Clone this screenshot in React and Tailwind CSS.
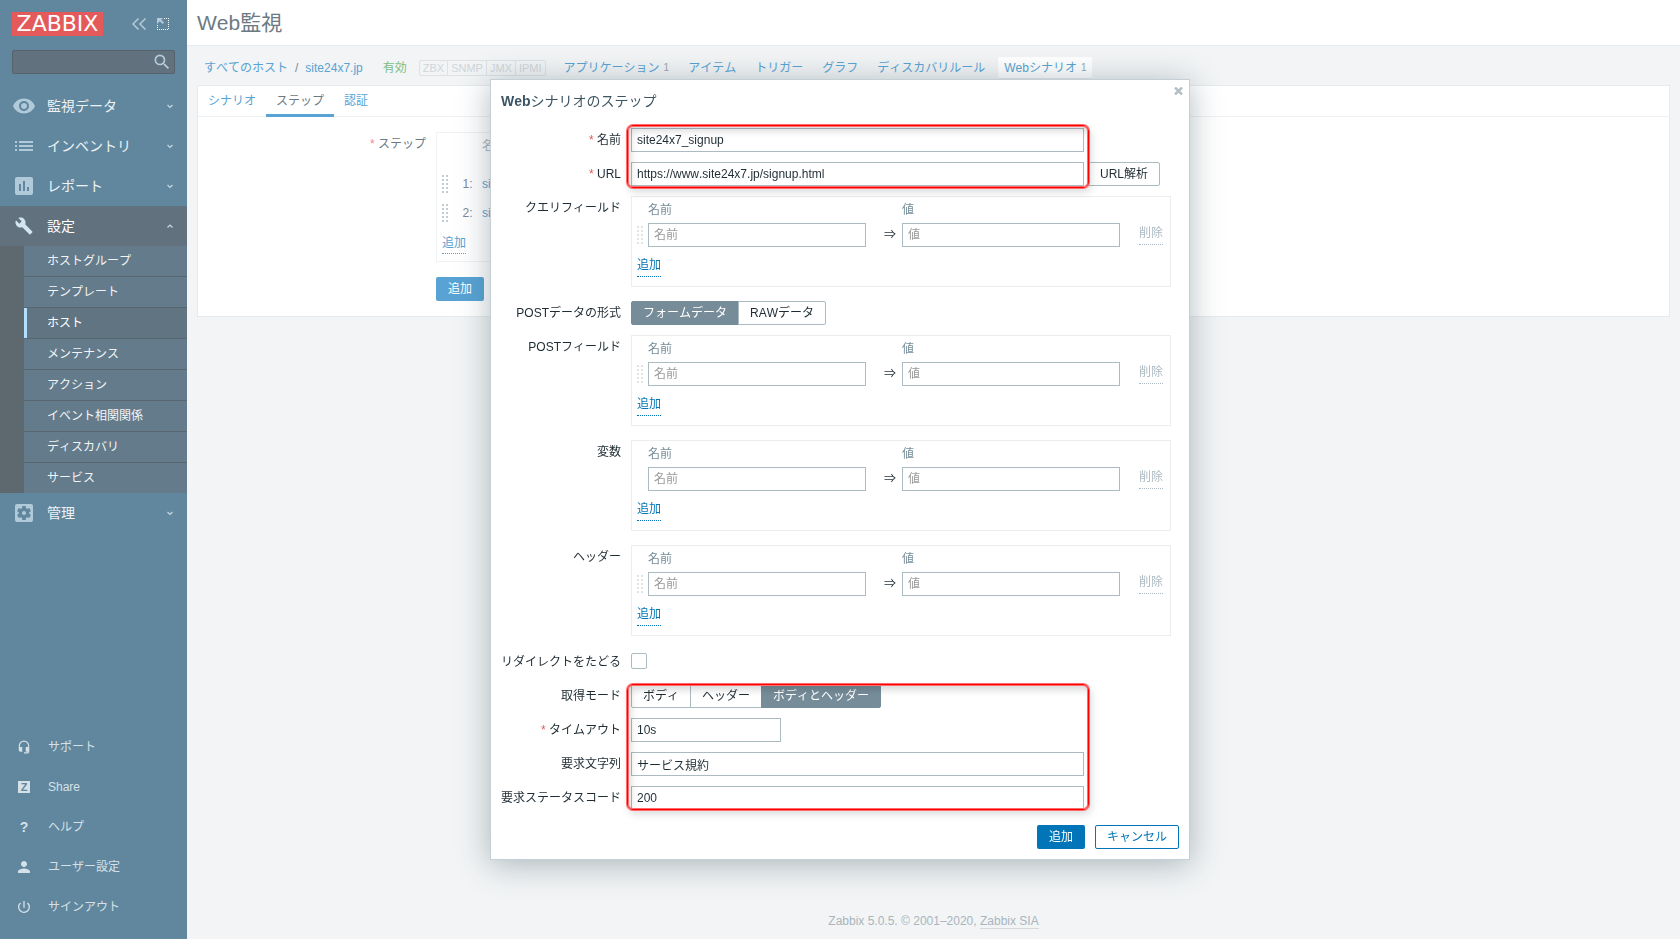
import React, { useState } from 'react';
import {
  MdVisibility,
  MdList,
  MdAssessment,
  MdSettingsApplications,
  MdSearch,
  MdHeadsetMic,
  MdPerson,
  MdPowerSettingsNew,
} from 'react-icons/md';

const mainMenu = [
  { label: '監視データ', icon: MdVisibility },
  { label: 'インベントリ', icon: MdList },
  { label: 'レポート', icon: MdAssessment },
  {
    label: '設定',
    icon: Wrench,
    open: true,
    items: [
      'ホストグループ',
      'テンプレート',
      'ホスト',
      'メンテナンス',
      'アクション',
      'イベント相関関係',
      'ディスカバリ',
      'サービス',
    ],
  },
  { label: '管理', icon: MdSettingsApplications },
];

const hostLinks = [
  { label: 'アプリケーション', count: 1 },
  { label: 'アイテム' },
  { label: 'トリガー' },
  { label: 'グラフ' },
  { label: 'ディスカバリルール' },
  { label: 'Webシナリオ', count: 1, selected: true },
];

function Wrench({ size, className }) {
  return (
    <svg width={size} height={size} viewBox="-3.500 -3.500 31 31" fill="currentColor" className={className}>
      <path d="M22.700 19l-9.100-9.100c.9-2.300.4-5-1.500-6.900-2-2-5-2.400-7.400-1.300L9 6 6 9 1.600 4.700C.4 7.100.9 10.100 2.900 12.100c1.900 1.900 4.600 2.400 6.900 1.500l9.100 9.100c.4.4 1 .4 1.400 0l2.300-2.300c.5-.4.5-1.100.1-1.400z" />
    </svg>
  );
}

function Chevron({ up }) {
  return (
    <svg width="8" height="6" viewBox="0 0 8 6" fill="none" stroke="#c8d8e1" strokeWidth="1.2">
      <path d={up ? 'M1.500 4.500 4 2 6.500 4.500' : 'M1.500 2 4 4.500 6.500 2'} />
    </svg>
  );
}

function DragHandle({ className }) {
  return (
    <svg width="6" height="18" viewBox="0 0 6 18" fill="currentColor" className={className}>
      {[0, 4, 8, 12, 16].map((y) => (
        <g key={y}>
          <rect x="0" y={y} width="2" height="2" />
          <rect x="4" y={y} width="2" height="2" />
        </g>
      ))}
    </svg>
  );
}

function SupportMenu() {
  const items = [
    { label: 'サポート', icon: <MdHeadsetMic size={14} /> },
    {
      label: 'Share',
      icon: (
        <span className="w-3 h-3 bg-[#d5e1e8] text-[#61879e] text-[11px] leading-3 font-bold text-center">Z</span>
      ),
    },
    { label: 'ヘルプ', icon: <span className="text-sm leading-4 font-bold">?</span> },
    { label: 'ユーザー設定', icon: <MdPerson size={18} /> },
    { label: 'サインアウト', icon: <MdPowerSettingsNew size={16} /> },
  ];

  return (
    <ul className="mt-auto pb-3">
      {items.map((item) => (
        <li key={item.label}>
          <a href="#" className="flex items-center h-10 pl-3 text-[#d5e1e8]">
            <span className="w-6 mr-3 flex justify-center">{item.icon}</span>
            {item.label}
          </a>
        </li>
      ))}
    </ul>
  );
}

function Sidebar() {
  return (
    <aside className="w-[187px] shrink-0 bg-[#61879e] flex flex-col">
      <div className="flex items-center h-6 mt-3 pl-3 pr-[18px]">
        <a href="#" className="w-[91px] h-6 bg-[#e45959] text-white text-[22px] leading-6 text-center font-['DejaVu_Sans',sans-serif]">
          ZABBIX
        </a>
        <button type="button" aria-label="サイドバーを隠す" className="ml-auto mr-[11px] text-[#b5cbd8]">
          <svg width="14" height="12" viewBox="0 0 14 12" fill="none" stroke="currentColor" strokeWidth="1.5">
            <path d="M6.5 0.5 1 6l5.5 5.5M13.5 0.5 8 6l5.5 5.5" />
          </svg>
        </button>
        <button type="button" aria-label="キオスクモード" className="text-white">
          <svg width="12" height="12" viewBox="0 0 12 12" fill="currentColor">
            <path d="M0 0h6L4.200 1.800 7 4.600 5.600 6 2.800 3.200 0 6z" fill="#b5cbd8" />
            <path
              d="M7 .5h1M9 .5h1M11 .5h1M11 2.500h1M11 4.500h1M11 6.500h1M11 8.500h1M11 10.500h1M0 7.500h1M0 9.500h1M0 11.500h1M2 11.500h1M4 11.500h1M6 11.500h1M8 11.500h1M10 11.500h1"
              stroke="currentColor"
              strokeWidth="1"
              fill="none"
            />
          </svg>
        </button>
      </div>

      <form className="mt-[14px] ml-3 mr-3 h-6 flex items-center bg-[#61717e] border border-[#56636d] rounded-xs">
        <input type="text" aria-label="検索" className="min-w-0 flex-1 h-full px-1 outline-none text-white" />
        <button type="button" aria-label="検索" className="mr-[2px] text-[#b5cbd8]">
          <MdSearch size={20} />
        </button>
      </form>

      <ul className="mt-3">
        {mainMenu.map((menu) => {
          const Icon = menu.icon;
          return (
            <li key={menu.label}>
              <a
                href="#"
                className={
                  menu.open
                    ? 'flex items-center h-10 pl-3 pr-[13px] text-sm bg-[#61717e] text-white'
                    : 'flex items-center h-10 pl-3 pr-[13px] text-sm text-[#edf2f5]'
                }
              >
                <Icon size={24} className={menu.open ? 'mr-[11px] text-[#d3e5f1]' : 'mr-[11px] text-[#b0cad9]'} />
                {menu.label}
                <span className="ml-auto">
                  <Chevron up={menu.open} />
                </span>
              </a>
              {menu.items && (
                <ul className="pl-6 bg-[#5e686f] divide-y divide-[#586670]">
                  {menu.items.map((item) => (
                    <li key={item} className="bg-[#647b8b]">
                      <a
                        href="#"
                        className={
                          item === 'ホスト'
                            ? 'flex items-center h-[30px] pl-5 border-l-[3px] border-[#b3e0ff] bg-[#617482] text-white'
                            : 'flex items-center h-[30px] pl-[23px] text-[#f2f5f7]'
                        }
                      >
                        {item}
                      </a>
                    </li>
                  ))}
                </ul>
              )}
            </li>
          );
        })}
      </ul>

      <SupportMenu />
    </aside>
  );
}

function HostNav() {
  return (
    <nav className="flex items-center h-[22px] mt-[11px] pl-[7px] whitespace-nowrap text-[#58a3d3]">
      <a href="#">すべてのホスト</a>
      <span className="mx-[7px] text-[#7c8a93]">/</span>
      <a href="#">site24x7.jp</a>
      <span className="ml-5 text-[#7dbf84]">有効</span>
      <span className="ml-3 mr-3 flex h-4 border border-[#dde2e5] rounded-xs divide-x divide-[#dde2e5] text-[11px] leading-[14px] text-[#cfd6da]">
        {['ZBX', 'SNMP', 'JMX', 'IPMI'].map((name) => (
          <span key={name} className="px-[3px]">{name}</span>
        ))}
      </span>
      <ul className="flex gap-[7px]">
        {hostLinks.map((link) => (
          <li key={link.label}>
            <a
              href="#"
              className={
                link.selected
                  ? 'flex items-center gap-1 h-[22px] px-[6px] bg-white rounded-xs border-b border-[#e6eaec]'
                  : 'flex items-center gap-1 h-[22px] px-[6px]'
              }
            >
              {link.label}
              {link.count && <span className="text-[10px] text-[#9aa6ad]">{link.count}</span>}
            </a>
          </li>
        ))}
      </ul>
    </nav>
  );
}

function StepsPanel() {
  return (
    <section className="mt-[6px] bg-white border border-[#e6eaec]">
      <div className="flex h-[31px] border-b border-[#eef1f2] text-[#58a3d3]">
        <a href="#" className="px-[10px] leading-[30px]">シナリオ</a>
        <a href="#" className="px-[10px] leading-[30px] h-[31px] border-b-[3px] border-[#58a3d3] text-[#6c7a84]">ステップ</a>
        <a href="#" className="px-[10px] leading-[30px]">認証</a>
      </div>
      <div className="grid grid-cols-[228px_1fr] gap-x-[10px] gap-y-[15px] py-[15px]">
        <div className="text-right leading-6 text-[#6c7a84]">
          <span className="text-[#ee8c8c]">*</span> ステップ
        </div>
        <div className="w-[600px] max-w-full h-[130px] border border-[#f0f2f3]">
          <table className="w-full table-fixed text-left text-[#7c8a93]">
            <thead>
              <tr className="h-9 align-top leading-[26px] text-[#a9b5bc]">
                <th className="w-[45px]" colSpan={2}></th>
                <th className="font-normal">名前</th>
              </tr>
            </thead>
            <tbody>
              {[1, 2].map((n) => (
                <tr key={n} className="h-[29px]">
                  <td className="w-5 pl-[5px]"><DragHandle className="text-[#c3ccd1]" /></td>
                  <td className="w-[25px] pl-[3px]">{n}:</td>
                  <td><a href="#" className="text-[#58a3d3]">site24x7</a></td>
                </tr>
              ))}
            </tbody>
          </table>
          <a href="#" className="block w-fit ml-[5px] mt-[6px] leading-5 border-b border-dotted border-[#58a3d3] text-[#58a3d3]">
            追加
          </a>
        </div>
        <button type="button" className="col-start-2 w-12 h-6 bg-[#58a3d3] text-white rounded-xs">追加</button>
      </div>
    </section>
  );
}

function FormRow({ label, htmlFor, required, children }) {
  return (
    <div className="grid grid-cols-[120px_1fr] gap-[10px]">
      <label htmlFor={htmlFor} className="text-right leading-6 whitespace-nowrap">
        {required && <span className="text-[#e45959]">* </span>}
        {label}
      </label>
      <div className="flex items-start">{children}</div>
    </div>
  );
}

function TextInput({ className, ...props }) {
  return (
    <input
      type="text"
      className={`h-6 px-[5px] bg-white border border-[#acbbc2] outline-none placeholder:text-[#999999] ${className}`}
      {...props}
    />
  );
}

function PairTable({ sortable = true }) {
  return (
    <div className="w-[540px] h-[91px] mb-1 border border-[#ebeef0]">
      <table className="w-full table-fixed text-left">
        <thead>
          <tr className="h-[26px] leading-[26px] text-[#768d99]">
            <th className="w-4"></th>
            <th className="w-[218px] font-normal">名前</th>
            <th className="w-9"></th>
            <th className="w-[218px] font-normal">値</th>
            <th></th>
          </tr>
        </thead>
        <tbody>
          <tr className="h-6">
            <td className="pl-[5px]">{sortable && <DragHandle className="text-[#dfe4e7]" />}</td>
            <td className="align-top"><TextInput aria-label="名前" placeholder="名前" className="block w-full" /></td>
            <td className="text-right pr-[6px]">⇒</td>
            <td className="align-top"><TextInput aria-label="値" placeholder="値" className="block w-full" /></td>
            <td className="align-top pl-[19px]">
              <a href="#" className="block w-fit leading-[21px] border-b border-dotted border-[#acbbc2] text-[#acbbc2]">削除</a>
            </td>
          </tr>
        </tbody>
      </table>
      <a href="#" className="block w-fit ml-[5px] mt-[8px] leading-[21px] border-b border-dotted border-[#0275b8] text-[#0275b8]">
        追加
      </a>
    </div>
  );
}

function Segmented({ name, options, value, onChange }) {
  return (
    <div className="flex">
      {options.map((option) => (
        <label
          key={option}
          className="h-6 px-[11px] leading-[22px] bg-white border border-[#acbbc2] -ml-px first:ml-0 first:rounded-l-xs last:rounded-r-xs cursor-pointer has-checked:bg-[#768d99] has-checked:border-[#768d99] has-checked:text-white"
        >
          <input
            type="radio"
            name={name}
            className="sr-only"
            checked={value === option}
            onChange={() => onChange(option)}
          />
          {option}
        </label>
      ))}
    </div>
  );
}

// red frame laid over the fields of a group
function Marker({ className }) {
  return (
    <div className={`pointer-events-none absolute left-[126px] w-[462px] rounded-md border border-[#ff0000] shadow-[0_0_0_1px_#ff6b6b,inset_0_0_0_1px_#ff6b6b,2px_4px_8px_rgba(0,0,0,0.15),inset_3px_5px_7px_rgba(0,0,0,0.15)] ${className}`}></div>
  );
}

function StepDialog() {
  const [postType, setPostType] = useState('フォームデータ');
  const [retrieveMode, setRetrieveMode] = useState('ボディとヘッダー');

  return (
    <div className="fixed inset-0 flex items-start justify-center pt-[79px] overflow-y-auto">
      <div role="dialog" className="w-[700px] px-[10px] pb-[10px] bg-white border border-[#c5d0d6] shadow-[0_4px_30px_rgba(60,85,99,0.4)] text-[#1f2c33]">
        <div className="flex items-start justify-between h-12">
          <h4 className="text-sm leading-[42px] text-[#3c5563]">
            <span className="font-bold">Web</span>シナリオのステップ
          </h4>
          <button type="button" aria-label="閉じる" className="mt-[7px] -mr-1 text-[#b4c0c7]">
            <svg width="9" height="8" viewBox="0 0 9 8" fill="none" stroke="currentColor" strokeWidth="2.500">
              <path d="M1 0.500 8 7.500M8 0.500 1 7.500" />
            </svg>
          </button>
        </div>

        <form className="flex flex-col gap-[10px]">
          <div className="relative flex flex-col gap-[10px]">
            <FormRow label="名前" htmlFor="step_name" required>
              <TextInput id="step_name" defaultValue="site24x7_signup" className="w-[453px]" />
            </FormRow>
            <FormRow label="URL" htmlFor="url" required>
              <TextInput id="url" defaultValue="https://www.site24x7.jp/signup.html" className="w-[453px]" />
              <button type="button" className="h-6 ml-1 px-[11px] border border-[#acbbc2] rounded-xs">URL解析</button>
            </FormRow>
            <Marker className="-top-[3px] -bottom-[2px]" />
          </div>

          <FormRow label="クエリフィールド">
            <PairTable />
          </FormRow>
          <FormRow label="POSTデータの形式">
            <Segmented
              name="post_type"
              options={['フォームデータ', 'RAWデータ']}
              value={postType}
              onChange={setPostType}
            />
          </FormRow>
          <FormRow label="POSTフィールド">
            <PairTable />
          </FormRow>
          <FormRow label="変数">
            <PairTable sortable={false} />
          </FormRow>
          <FormRow label="ヘッダー">
            <PairTable />
          </FormRow>
          <FormRow label="リダイレクトをたどる" htmlFor="follow_redirects">
            <input
              type="checkbox"
              id="follow_redirects"
              className="appearance-none size-4 mt-[3px] bg-white border border-[#acbbc2] rounded-xs checked:bg-[#0275b8]"
            />
          </FormRow>

          <div className="relative flex flex-col gap-[10px]">
            <FormRow label="取得モード">
              <Segmented
                name="retrieve_mode"
                options={['ボディ', 'ヘッダー', 'ボディとヘッダー']}
                value={retrieveMode}
                onChange={setRetrieveMode}
              />
            </FormRow>
            <FormRow label="タイムアウト" htmlFor="timeout" required>
              <TextInput id="timeout" defaultValue="10s" className="w-[150px]" />
            </FormRow>
            <FormRow label="要求文字列" htmlFor="required">
              <TextInput id="required" defaultValue="サービス規約" className="w-[453px]" />
            </FormRow>
            <FormRow label="要求ステータスコード" htmlFor="status_codes">
              <TextInput id="status_codes" defaultValue="200" className="w-[453px]" />
            </FormRow>
            <Marker className="top-0 bottom-0" />
          </div>

          <div className="flex justify-end gap-[10px] mt-[5px]">
            <button type="button" className="h-6 px-3 bg-[#0275b8] text-white rounded-xs">追加</button>
            <button type="button" className="h-6 px-[11px] border border-[#0275b8] text-[#0275b8] rounded-xs">キャンセル</button>
          </div>
        </form>
      </div>
    </div>
  );
}

export default function App() {
  return (
    <div className="min-h-screen flex bg-[#f2f4f5] text-xs [font-kerning:none] font-['Liberation_Sans','Noto_Sans_CJK_JP',sans-serif]">
      <Sidebar />
      <div className="flex-1 min-w-0 flex flex-col">
        <header className="h-[46px] pl-[10px] bg-white border-b border-[#e8ebed]">
          <h1 className="text-[21px] leading-[45px] text-[#6c7a84]">Web監視</h1>
        </header>
        <main className="px-[10px]">
          <HostNav />
          <StepsPanel />
        </main>
        <footer className="mt-auto pb-[9px] text-center leading-[18px] text-[#a9b5bd]">
          Zabbix 5.0.5. © 2001–2020, <a href="#" className="border-b border-[#d3d9dd]">Zabbix SIA</a>
        </footer>
      </div>
      <StepDialog />
    </div>
  );
}
